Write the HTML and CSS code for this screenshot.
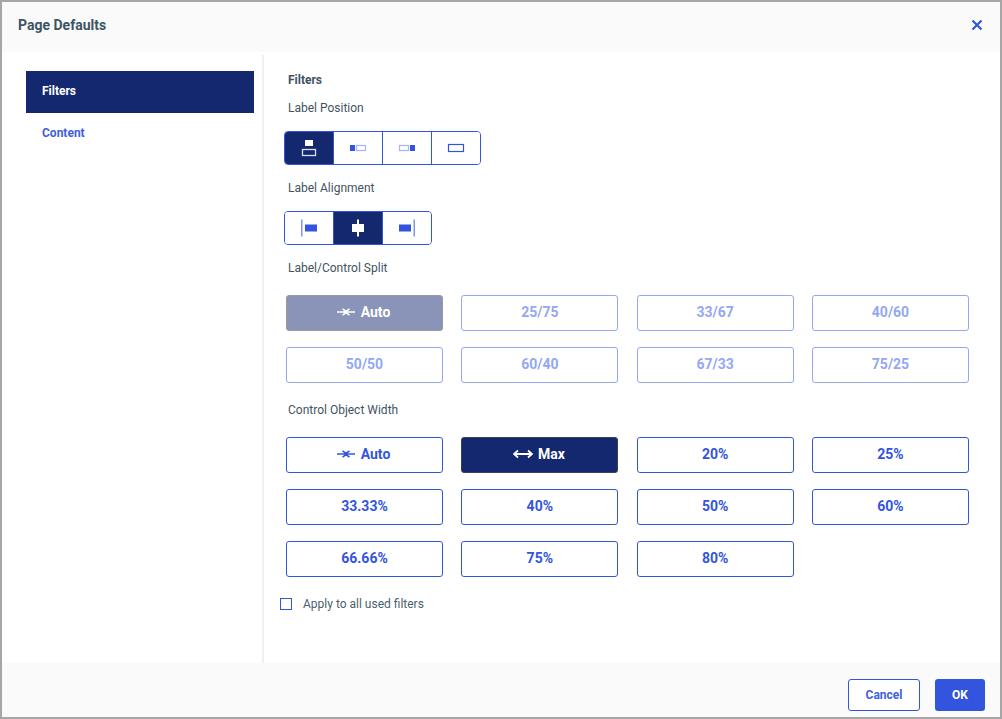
FILE: index.html
```html
<!DOCTYPE html>
<html lang="en">
<head>
<meta charset="utf-8">
<title>Page Defaults</title>
<link rel="stylesheet" href="styles.css">
</head>
<body>
<div class="dialog">
  <header class="head">
    <h1 class="title">Page Defaults</h1>
    <svg class="close" width="12" height="12" viewBox="0 0 12 12"><path d="M1.500 1.500l9 9M10.500 1.500l-9 9" stroke="#3355dd" stroke-width="2.200" fill="none"/></svg>
  </header>
  <div class="body">
    <nav class="side">
      <div class="nav-item active">Filters</div>
      <div class="nav-item">Content</div>
    </nav>
    <main class="content">
      <div class="label strong first">Filters</div>
      <div class="label">Label Position</div>
      <div class="group">
        <div class="seg on"><svg width="16" height="18" viewBox="0 0 16 18"><rect x="4" y="1" width="8" height="6" fill="#fff"/><rect x="1.500" y="10.500" width="13" height="6" fill="none" stroke="#d8def5" stroke-width="1.300"/></svg></div>
        <div class="seg"><svg width="18" height="8" viewBox="0 0 18 8"><rect x="1" y="1" width="5" height="6" fill="#3355dd"/><rect x="7.500" y="1.500" width="9" height="5" fill="none" stroke="#a9b8f0" stroke-width="1.300"/></svg></div>
        <div class="seg"><svg width="18" height="8" viewBox="0 0 18 8"><rect x="1.500" y="1.500" width="9" height="5" fill="none" stroke="#a9b8f0" stroke-width="1.300"/><rect x="12" y="1" width="5" height="6" fill="#3355dd"/></svg></div>
        <div class="seg"><svg width="18" height="10" viewBox="0 0 18 10"><rect x="1.500" y="1.500" width="15" height="7" fill="none" stroke="#3355dd" stroke-width="1.200"/></svg></div>
      </div>
      <div class="label">Label Alignment</div>
      <div class="group">
        <div class="seg"><svg width="18" height="18" viewBox="0 0 18 18"><rect x="1" y="0.500" width="1.500" height="17" fill="#7f95e8"/><rect x="5" y="5.500" width="12" height="7" fill="#3355dd"/></svg></div>
        <div class="seg on"><svg width="14" height="18" viewBox="0 0 14 18"><rect x="6" y="0.500" width="2" height="17" fill="#fff"/><rect x="1" y="5" width="12" height="8" fill="#fff"/></svg></div>
        <div class="seg"><svg width="18" height="18" viewBox="0 0 18 18"><rect x="1" y="5.500" width="12" height="7" fill="#3355dd"/><rect x="15.500" y="0.500" width="1.500" height="17" fill="#7f95e8"/></svg></div>
      </div>
      <div class="label">Label/Control Split</div>
      <div class="grid">
        <div class="btn icon off-active"><svg class="arrow" width="18" height="8" viewBox="0 0 18 8"><path d="M0 4h8M5.500 .8L10 4 5.500 7.200M18 4h-8M12.500 .8L8 4l4.500 3.200" stroke="#fff" stroke-width="1.600" fill="none"/></svg><span>Auto</span></div>
        <div class="btn off">25/75</div>
        <div class="btn off">33/67</div>
        <div class="btn off">40/60</div>
        <div class="btn off">50/50</div>
        <div class="btn off">60/40</div>
        <div class="btn off">67/33</div>
        <div class="btn off">75/25</div>
      </div>
      <div class="label wide">Control Object Width</div>
      <div class="grid">
        <div class="btn icon"><svg class="arrow" width="18" height="8" viewBox="0 0 18 8"><path d="M0 4h8M5.500 .8L10 4 5.500 7.200M18 4h-8M12.500 .8L8 4l4.500 3.200" stroke="#3355dd" stroke-width="1.600" fill="none"/></svg><span>Auto</span></div>
        <div class="btn icon sel"><svg class="arrow" width="20" height="10" viewBox="0 0 20 10"><path d="M1 5h18M5 1.500L1 5l4 3.500M15 1.500L19 5l-4 3.500" stroke="#fff" stroke-width="1.800" fill="none"/></svg><span>Max</span></div>
        <div class="btn">20%</div>
        <div class="btn">25%</div>
        <div class="btn">33.33%</div>
        <div class="btn">40%</div>
        <div class="btn">50%</div>
        <div class="btn">60%</div>
        <div class="btn">66.66%</div>
        <div class="btn">75%</div>
        <div class="btn">80%</div>
      </div>
      <label class="check"><span class="box"></span><span>Apply to all used filters</span></label>
    </main>
  </div>
  <footer class="foot">
    <div class="action cancel">Cancel</div>
    <div class="action ok">OK</div>
  </footer>
</div>
</body>
</html>
```
FILE: styles.css
```css
* { box-sizing: border-box; }
html, body { margin: 0; padding: 0; }
body { width: 1002px; height: 719px; overflow: hidden; background: #fff; font-family: Roboto, "Liberation Sans", sans-serif; color: #3a5060; }
.dialog { width: 1002px; height: 719px; border: 2px solid #a6a6a6; display: flex; flex-direction: column; background: #fff; }
.head { height: 50px; flex: none; background: #fafafa; display: flex; align-items: center; justify-content: space-between; padding: 0 17px 4px 16px; }
.title { margin: 0; font-size: 14px; line-height: 18px; font-weight: 700; color: #3a5564; }
.close { display: block; }
.body { flex: 1; display: flex; min-height: 0; }
.side { width: 262px; flex: none; border-right: 2px solid #f0f0f0; margin-top: 3px; padding: 16px 8px 0 24px; }
.nav-item { height: 42px; padding: 0 0 2px 16px; display: flex; align-items: center; font-size: 12px; font-weight: 700; color: #3f5fe0; }
.nav-item.active { background: #14286f; color: #fff; }
.content { flex: 1; padding: 0 31px 0 16px; }
.label { font-size: 12px; line-height: 16px; height: 16px; padding: 1px 0 0 8px; margin: 14px 0 16px; color: #3f5462; }
.label.first { margin: 20px 0 11px; padding-top: 0; }
.label.first + .label { margin-top: 11px; }
.label.strong { font-weight: 700; }
.label.wide { margin: 18px 0 20px; }
.group { display: inline-flex; vertical-align: top; margin-left: 4px; border: 1px solid #3355dd; border-radius: 4px; overflow: hidden; height: 34px; }
.seg { width: 49px; display: flex; align-items: center; justify-content: center; border-right: 1px solid #3355dd; background: #fff; }
.seg:last-child { border-right: 0; width: 48px; }
.seg.on { background: #14286f; }
.seg svg { display: block; }
.group + .label { margin-top: 14px; }
.grid { display: grid; grid-template-columns: repeat(4, 157px); column-gap: 18.33px; row-gap: 16px; margin-left: 6px; }
.grid:has(.off) { margin-top: 20px; }
.btn { height: 36px; padding-bottom: 2px; border: 1px solid #3355dd; border-radius: 3px; display: flex; align-items: center; justify-content: center; gap: 6px; font-size: 14px; font-weight: 700; color: #3355dd; background: #fff; }
.btn.icon { padding-right: 2px; }
.btn.off { border-color: #94a8f2; color: #94a8f2; }
.btn.off-active { background: #8a94b8; border-color: #9a9a9a; color: #fff; }
.btn.sel { background: #14286f; border-color: #3b4152; color: #fff; gap: 5px; }
.arrow { display: block; }
.check { display: flex; align-items: center; gap: 11px; margin-top: 21px; font-size: 12px; color: #4b5f6c; height: 12px; }
.box { width: 12px; height: 12px; border: 1px solid #3355dd; display: block; }
.foot { height: 54px; flex: none; background: #fafafa; display: flex; align-items: flex-start; justify-content: flex-end; gap: 15px; padding: 16px 15px 0 0; }
.action { height: 32px; border-radius: 3px; display: flex; align-items: center; justify-content: center; font-size: 12px; font-weight: 700; }
.cancel { width: 72px; border: 1px solid #3355dd; color: #3f5fe0; background: #fff; }
.ok { width: 50px; background: #3355dd; color: #fff; }
```
